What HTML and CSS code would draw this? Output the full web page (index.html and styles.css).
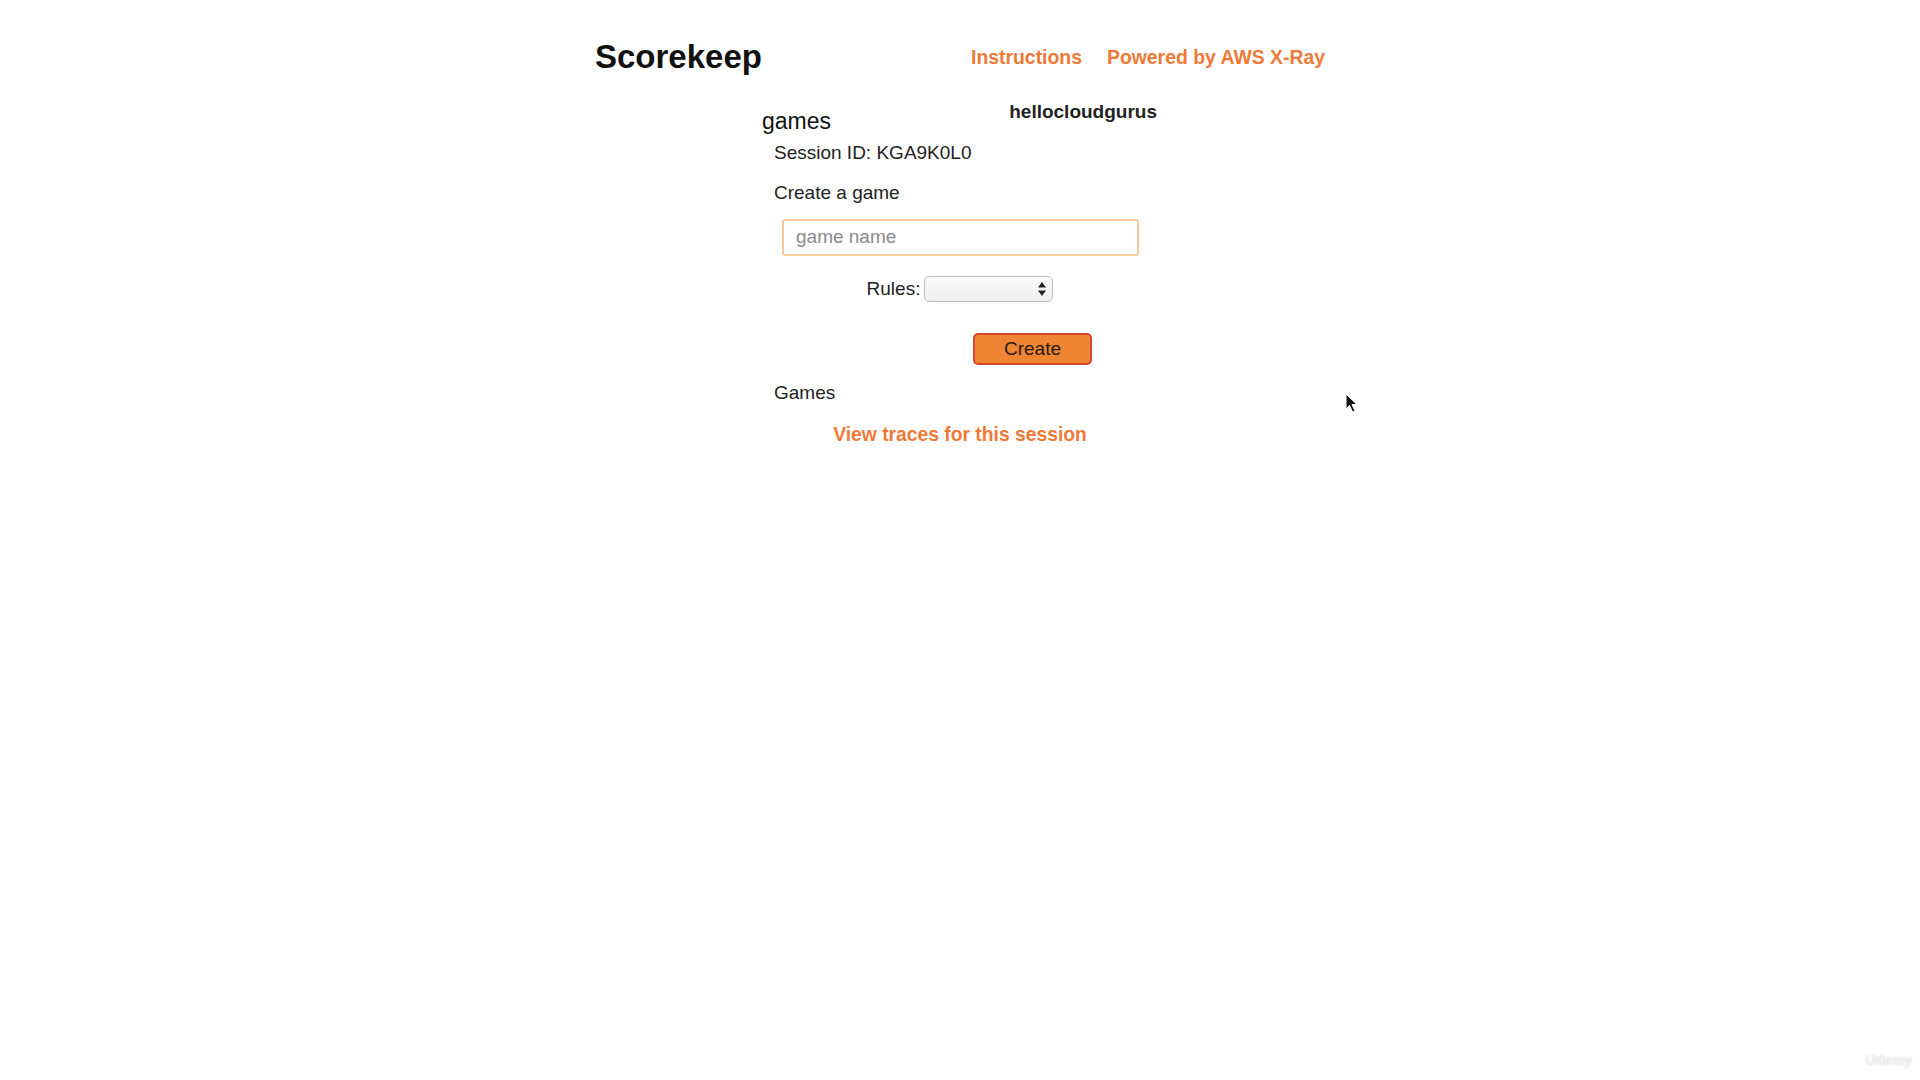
FILE: index.html
```html
<!DOCTYPE html>
<html>
<head>
<meta charset="utf-8">
<title>Scorekeep</title>
<link rel="stylesheet" href="styles.css">
</head>
<body>
<header class="topbar">
  <div class="brand">Scorekeep</div>
  <nav class="links">
    <a class="link" href="#">Instructions</a>
    <a class="link" href="#">Powered by AWS X-Ray</a>
  </nav>
</header>
<main class="panel">
  <div class="title-row">
    <div class="games-title">games</div>
    <div class="user">hellocloudgurus</div>
  </div>
  <div class="session">Session ID: KGA9K0L0</div>
  <div class="label create-label">Create a game</div>
  <div class="input-wrap">
    <input class="name-input" type="text" placeholder="game name">
  </div>
  <div class="rules-row">
    <span class="label">Rules:</span>
    <div class="select">
      <svg class="arrows" width="8" height="14" viewBox="0 0 8 14"><path d="M4 0 L8 5.5 L0 5.5 Z M4 14 L8 8.5 L0 8.5 Z" fill="#222"/></svg>
    </div>
  </div>
  <div class="button-row">
    <button class="create-btn">Create</button>
  </div>
  <div class="label games-label">Games</div>
  <div class="traces-row">
    <a class="link traces" href="#">View traces for this session</a>
  </div>
</main>
<svg class="cursor" width="14" height="20" viewBox="0 0 14 20"><path d="M1 1 L1 16 L4.5 12.5 L7.5 19 L10 18 L7 11.5 L12 11.5 Z" fill="#111" stroke="#fff" stroke-width="1"/></svg>
<div class="watermark">Udemy</div>
</body>
</html>
```
FILE: styles.css
```css
html, body {
  margin: 0;
  padding: 0;
  background: #ffffff;
}
body {
  font-family: "Liberation Sans", Arial, Helvetica, sans-serif;
  color: #222;
  position: relative;
  width: 1920px;
  height: 1080px;
  overflow: hidden;
}
.topbar {
  width: 730px;
  margin: 0 auto;
  padding-top: 36.5px;
  height: 40px;
  display: flex;
  justify-content: space-between;
  align-items: center;
}
.brand {
  font-size: 33px;
  font-weight: bold;
  color: #111;
  line-height: 40px;
}
.links {
  display: flex;
  gap: 25px;
  align-items: center;
  margin-top: 1px;
}
.link {
  color: #ef7a38;
  font-weight: bold;
  font-size: 19.4px;
  text-decoration: none;
  line-height: 24px;
}
.panel {
  width: 396px;
  margin: 0 auto;
  display: flex;
  flex-direction: column;
}
.title-row {
  margin-top: 23px;
  display: flex;
  justify-content: space-between;
  align-items: flex-start;
}
.games-title {
  font-size: 23px;
  line-height: 28px;
  margin-top: 7px;
  color: #111;
}
.user {
  font-size: 19px;
  font-weight: bold;
  line-height: 23px;
  color: #222;
  margin-right: 1px;
}
.session, .label {
  font-size: 19px;
  line-height: 24px;
  color: #222;
}
.session {
  margin-top: 6px;
  padding-left: 12px;
}
.create-label {
  margin-top: 16.5px;
  padding-left: 12px;
}
.input-wrap {
  margin-top: 13.5px;
  padding-left: 20px;
}
.name-input {
  box-sizing: border-box;
  width: 357px;
  height: 37px;
  border: 2px solid #f6c99b;
  border-radius: 3px;
  padding: 0 0 0 12px;
  font-family: "Liberation Sans", Arial, sans-serif;
  font-size: 19px;
  color: #222;
  outline: none;
  display: block;
}
.name-input::placeholder {
  color: #8a8a8a;
}
.rules-row {
  margin-top: 20px;
  display: flex;
  justify-content: center;
  align-items: center;
  gap: 4px;
}
.select {
  box-sizing: border-box;
  width: 129px;
  height: 26px;
  border: 1px solid #bdbdbd;
  border-radius: 5px;
  background: linear-gradient(#fafafa, #efefef);
  display: flex;
  justify-content: flex-end;
  align-items: center;
  padding-right: 6px;
}
.button-row {
  margin-top: 31.5px;
  padding-left: 211px;
  display: flex;
}
.create-btn {
  box-sizing: border-box;
  width: 119px;
  height: 32px;
  background: #ef8433;
  border: 2px solid #d9472d;
  border-radius: 5px;
  font-family: "Liberation Sans", Arial, sans-serif;
  font-size: 19px;
  color: #2a1a10;
  padding: 0;
}
.games-label {
  margin-top: 15.5px;
  padding-left: 12px;
}
.traces-row {
  margin-top: 18px;
  display: flex;
  justify-content: center;
}
.traces {
  font-size: 19.3px;
}
.cursor {
  position: absolute;
  left: 1345px;
  top: 393px;
}
.watermark {
  position: absolute;
  right: 8px;
  bottom: 12px;
  font-family: "Liberation Sans", Arial, sans-serif;
  font-weight: bold;
  font-size: 14px;
  color: #f4f4f4;
  text-shadow: 0 0 2px #d0d0d0;
}
```
